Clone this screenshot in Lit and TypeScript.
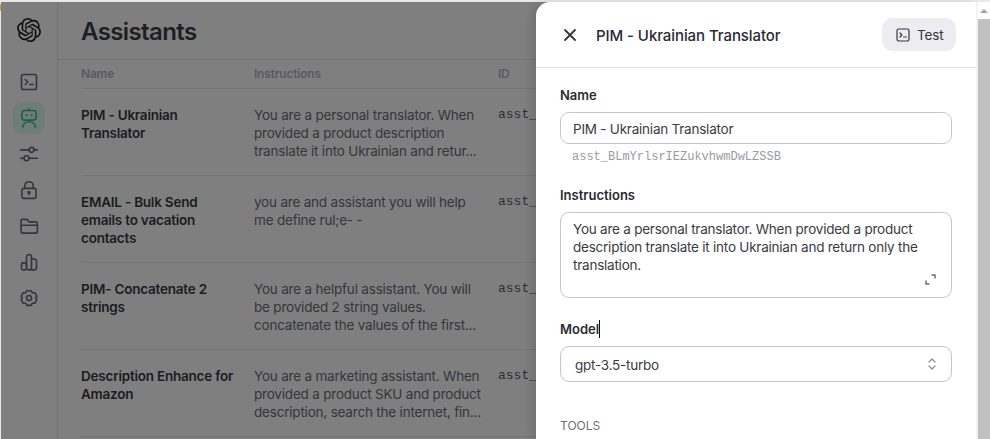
import { LitElement, html, css, svg } from "lit";
import { customElement } from "lit/decorators.js";

const LOGO = "M22.2819 9.8211a5.9847 5.9847 0 0 0-.5157-4.9108 6.0462 6.0462 0 0 0-6.5098-2.9A6.0651 6.0651 0 0 0 4.9807 4.1818a5.9847 5.9847 0 0 0-3.9977 2.9 6.0462 6.0462 0 0 0 .7427 7.0966 5.98 5.98 0 0 0 .511 4.9107 6.051 6.051 0 0 0 6.5146 2.9001A5.9847 5.9847 0 0 0 13.2599 24a6.0557 6.0557 0 0 0 5.7718-4.2058 5.9894 5.9894 0 0 0 3.9977-2.9001 6.0557 6.0557 0 0 0-.7475-7.0729zm-9.022 12.6081a4.4755 4.4755 0 0 1-2.8764-1.0408l.1419-.0804 4.7783-2.7582a.7948.7948 0 0 0 .3927-.6813v-6.7369l2.02 1.1686a.071.071 0 0 1 .038.052v5.5826a4.504 4.504 0 0 1-4.4945 4.4944zm-9.6607-4.1254a4.4708 4.4708 0 0 1-.5346-3.0137l.142.0852 4.783 2.7582a.7712.7712 0 0 0 .7806 0l5.8428-3.3685v2.3324a.0804.0804 0 0 1-.0332.0615L9.74 19.9502a4.4992 4.4992 0 0 1-6.1408-1.6464zM2.3408 7.8956a4.485 4.485 0 0 1 2.3655-1.9728V11.6a.7664.7664 0 0 0 .3879.6765l5.8144 3.3543-2.0201 1.1685a.0757.0757 0 0 1-.071 0l-4.8303-2.7865A4.504 4.504 0 0 1 2.3408 7.872zm16.5963 3.8558L13.1038 8.364 15.1192 7.2a.0757.0757 0 0 1 .071 0l4.8303 2.7913a4.4944 4.4944 0 0 1-.6765 8.1042v-5.6772a.79.79 0 0 0-.407-.667zm2.0107-3.0231l-.142-.0852-4.7735-2.7818a.7759.7759 0 0 0-.7854 0L9.409 9.2297V6.8974a.0662.0662 0 0 1 .0284-.0615l4.8303-2.7866a4.4992 4.4992 0 0 1 6.6802 4.66zM8.3065 12.863l-2.02-1.1638a.0804.0804 0 0 1-.038-.0567V6.0742a4.4992 4.4992 0 0 1 7.3757-3.4537l-.142.0805L8.704 5.459a.7948.7948 0 0 0-.3927.6813zm1.0976-2.3654l2.602-1.4998 2.6069 1.4998v2.9994l-2.5974 1.4997-2.6067-1.4997Z";

const terminal = svg`<rect x="3" y="3" width="18" height="18" rx="2.5"/><path d="M7.5 9l3 3-3 3M13 15h4"/>`;
const robot = svg`<path d="M12 1v2"/><rect x="3.500" y="3" width="17" height="11.500" rx="3"/><path d="M9 8.500v.01M15 8.500v.01" stroke-width="2.600"/><path d="M4.500 23c0-3.800 3.200-6.500 7.500-6.500s7.500 2.700 7.500 6.500"/>`;
const sliders = svg`<path d="M2 7h10.500M18.500 7H22M2 17h4M12 17h10"/><circle cx="15" cy="7" r="3"/><circle cx="9" cy="17" r="3"/>`;
const lock = svg`<rect x="3.500" y="10" width="17" height="12" rx="2.500"/><path d="M7 10V7a5 5 0 0 1 10 0v3"/><path d="M12 15v2.500"/><circle cx="12" cy="15" r="1.200" fill="currentColor"/>`;
const folder = svg`<path d="M2.500 8V5.500A1.500 1.500 0 0 1 4 4h5.500L12 7h8.500A1.500 1.500 0 0 1 22 8.500V19a1.500 1.500 0 0 1-1.500 1.500H4A1.500 1.500 0 0 1 2.500 19z"/><path d="M2.500 11H22"/>`;
const chart = svg`<rect x="3" y="13" width="6" height="8.500" rx="2"/><rect x="9" y="3" width="6" height="18.500" rx="3"/><path d="M15 8.500h3a3 3 0 0 1 3 3v7a3 3 0 0 1-3 3h-3"/>`;
const gear = svg`<path d="M9.500 3.200h5l1.500 2.600 3-.1 2.500 4.300-1.500 2 1.500 2-2.500 4.300-3-.1-1.500 2.600h-5L8 18.200l-3 .1-2.500-4.300 1.500-2-1.500-2L5 5.700l3 .1z" stroke-linejoin="round"/><circle cx="12" cy="12" r="3"/>`;

const navIcons = [
  { icon: terminal, active: false },
  { icon: robot, active: true },
  { icon: sliders, active: false },
  { icon: lock, active: false },
  { icon: folder, active: false },
  { icon: chart, active: false },
  { icon: gear, active: false },
];

const rows = [
  {
    name: "PIM - Ukrainian Translator",
    text: "You are a personal translator. When provided a product description translate it into Ukrainian and retur...",
  },
  {
    name: "EMAIL - Bulk Send emails to vacation contacts",
    text: "you are and assistant you will help me define rul;e- -",
  },
  {
    name: "PIM- Concatenate 2 strings",
    text: "You are a helpful assistant. You will be provided 2 string values. concatenate the values of the first...",
  },
  {
    name: "Description Enhance for Amazon",
    text: "You are a marketing assistant. When provided a product SKU and product description, search the internet, fin...",
  },
];

@customElement("app-root")
export class AppRoot extends LitElement {
  static styles = css`
    :host {
      display: block;
      height: 439px;
      overflow: hidden;
      font-family: Inter, "Noto Sans", sans-serif;
      color: #1f1f25;
    }
    .page {
      position: relative;
      box-sizing: border-box;
      height: 439px;
      padding: 2px 0 0 1px;
      background: #e9e9e9;
      overflow: hidden;
    }
    .tick {
      position: absolute;
      left: 0;
      top: 4px;
      width: 1px;
      height: 7px;
      background: #d99a4e;
    }
    .shell {
      display: flex;
      height: 437px;
      background: #7f7f7f;
    }
    .side {
      flex: none;
      width: 56px;
      border-right: 1px solid #727272;
      display: flex;
      flex-direction: column;
      align-items: center;
    }
    .logo {
      width: 24px;
      height: 24px;
      margin-top: 16px;
      margin-bottom: 22px;
      margin-left: -1px;
      fill: #0d0d0d;
      display: block;
    }
    .nav {
      width: 32px;
      height: 32px;
      margin: 2px 0;
      margin-left: -1px;
      border-radius: 9px;
      display: flex;
      align-items: center;
      justify-content: center;
      color: #35353f;
    }
    .nav.active {
      background: #6f7d78;
      color: #1c5e4a;
    }
    .nav svg {
      width: 20px;
      height: 20px;
      fill: none;
      stroke: currentColor;
      stroke-width: 1.900;
      stroke-linecap: round;
      stroke-linejoin: round;
    }
    .main {
      flex: 1;
      min-width: 0;
    }
    .top {
      height: 58px;
      box-sizing: border-box;
      border-bottom: 1px solid #727272;
      padding: 16px 0 0 23px;
    }
    h1 {
      margin: 0;
      font-size: 24px;
      line-height: 28px;
      font-weight: 600;
      letter-spacing: -0.6px;
      color: #1e1e26;
    }
    .table {
      margin-left: 23px;
    }
    .row {
      display: grid;
      grid-template-columns: 173px 244px 1fr;
      border-bottom: 1px solid #747474;
      box-sizing: border-box;
      height: 87px;
      padding-top: 17px;
      font-size: 13.500px;
      line-height: 18px;
    }
    .row.head {
      height: 29px;
      padding-top: 6px;
      font-size: 12px;
      line-height: 16px;
      font-weight: 600;
      letter-spacing: -0.2px;
      color: #5a5a5e;
    }
    .name {
      font-weight: 600;
      font-size: 13.500px;
      letter-spacing: -0.22px;
      color: #1b1b21;
      padding-right: 16px;
    }
    .text {
      color: #35353d;
      letter-spacing: -0.2px;
      padding-right: 14px;
      height: 54px;
    }
    .id {
      font-family: "Liberation Mono", monospace;
      font-size: 13px;
      color: #2e2e34;
      white-space: nowrap;
    }
    .panel {
      position: absolute;
      top: 2px;
      right: 0;
      bottom: 0;
      display: flex;
    }
    .drawer {
      width: 440px;
      background: #fff;
      border-top-left-radius: 14px;
      box-shadow: -4px 0 10px rgba(0, 0, 0, 0.12);
      overflow: hidden;
    }
    .bar {
      width: 14px;
      background: #f3f3f3;
      display: flex;
      flex-direction: column;
      align-items: flex-end;
    }
    .arrow {
      flex: none;
      width: 12px;
      height: 17px;
      display: flex;
      align-items: center;
      justify-content: center;
      background: #fff;
    }
    .arrow i {
      width: 0;
      height: 0;
      border-left: 4px solid transparent;
      border-right: 4px solid transparent;
      border-bottom: 4px solid #a3a3a3;
    }
    .thumb {
      flex: 1;
      width: 12px;
      background: #c1c1c1;
    }
    .dhead {
      height: 66px;
      box-sizing: border-box;
      border-bottom: 1px solid #e2e2e6;
      display: flex;
      align-items: center;
      padding: 0 20px 0 28px;
    }
    .close {
      width: 12px;
      height: 12px;
      fill: none;
      stroke: #33333c;
      stroke-width: 1.800;
      stroke-linecap: round;
      flex: none;
    }
    .dtitle {
      flex: 1;
      margin-left: 20px;
      padding-top: 1px;
      font-size: 15px;
      font-weight: 500;
      letter-spacing: -0.08px;
      color: #2a2a32;
    }
    .test {
      width: 74px;
      height: 33px;
      box-sizing: border-box;
      padding-left: 13px;
      border-radius: 10px;
      background: #ececf1;
      display: flex;
      align-items: center;
      gap: 6px;
      font-size: 13.500px;
      letter-spacing: -0.1px;
      color: #35353e;
    }
    .test svg {
      width: 16px;
      height: 16px;
      fill: none;
      stroke: #35353e;
      stroke-width: 1.800;
      stroke-linecap: round;
      stroke-linejoin: round;
    }
    .form {
      padding: 18px 24px 0;
      display: flex;
      flex-direction: column;
    }
    label {
      font-size: 13px;
      font-weight: 600;
      line-height: 18px;
      color: #2b2b33;
      display: block;
    }
    .input,
    .area,
    .select {
      box-sizing: border-box;
      border: 1px solid #c5c5d2;
      border-radius: 9px;
      font-size: 13.500px;
      letter-spacing: -0.23px;
      line-height: 18px;
      color: #3b3b44;
      margin-top: 8px;
    }
    .input {
      height: 32px;
      padding: 7px 12px 5px;
    }
    .mono {
      font-family: "Liberation Mono", monospace;
      font-size: 12px;
      line-height: 16px;
      color: #9a9aa6;
      padding: 5px 0 0 12px;
      margin-bottom: 21px;
    }
    .area {
      position: relative;
      height: 86px;
      padding: 7px 12px;
      margin-bottom: 22px;
    }
    .expand {
      position: absolute;
      right: 15px;
      bottom: 12px;
      width: 11px;
      height: 11px;
      fill: none;
      stroke: #6e6e7a;
      stroke-width: 1.500;
    }
    .model {
      display: flex;
      align-items: center;
    }
    .caret {
      width: 1px;
      height: 18px;
      background: #111;
    }
    .select {
      height: 36px;
      padding: 2px 14px 0;
      display: flex;
      align-items: center;
      justify-content: space-between;
    }
    .select svg {
      width: 10px;
      height: 14px;
      margin-top: -3px;
      fill: none;
      stroke: #8e8ea0;
      stroke-width: 1.300;
      stroke-linecap: round;
      stroke-linejoin: round;
    }
    .tools {
      margin-top: 36px;
      font-size: 12px;
      line-height: 16px;
      color: #6e6e7a;
    }
  `;

  render() {
    return html`
      <div class="page">
        <div class="tick"></div>
        <div class="shell">
          <aside class="side">
            <svg class="logo" viewBox="0 0 24 24"><path d=${LOGO} /></svg>
            ${navIcons.map(
              (n) => html`<div class="nav ${n.active ? "active" : ""}">
                <svg viewBox="0 0 24 24">${n.icon}</svg>
              </div>`
            )}
          </aside>
          <main class="main">
            <div class="top"><h1>Assistants</h1></div>
            <div class="table">
              <div class="row head">
                <div>Name</div>
                <div>Instructions</div>
                <div>ID</div>
              </div>
              ${rows.map(
                (r) => html`<div class="row">
                  <div class="name">${r.name}</div>
                  <div class="text">${r.text}</div>
                  <div class="id">asst_</div>
                </div>`
              )}
            </div>
          </main>
        </div>
        <div class="panel">
          <section class="drawer">
            <div class="dhead">
              <svg class="close" viewBox="0 0 12 12"><path d="M1 1l10 10M11 1L1 11" /></svg>
              <div class="dtitle">PIM - Ukrainian Translator</div>
              <div class="test">
                <svg viewBox="0 0 24 24">${terminal}</svg>
                <span>Test</span>
              </div>
            </div>
            <div class="form">
              <label>Name</label>
              <div class="input">PIM - Ukrainian Translator</div>
              <div class="mono">asst_BLmYrlsrIEZukvhwmDwLZSSB</div>
              <label>Instructions</label>
              <div class="area">
                You are a personal translator. When provided a product description translate it into
                Ukrainian and return only the translation.
                <svg class="expand" viewBox="0 0 11 11">
                  <path d="M6.500 1H10v3.500M1 6.500V10h3.500" />
                </svg>
              </div>
              <label class="model">Model<span class="caret"></span></label>
              <div class="select">
                <span>gpt-3.5-turbo</span>
                <svg viewBox="0 0 10 14"><path d="M2 5l3-3 3 3M2 9l3 3 3-3" /></svg>
              </div>
              <div class="tools">TOOLS</div>
            </div>
          </section>
          <div class="bar">
            <div class="arrow"><i></i></div>
            <div class="thumb"></div>
          </div>
        </div>
      </div>
    `;
  }
}
